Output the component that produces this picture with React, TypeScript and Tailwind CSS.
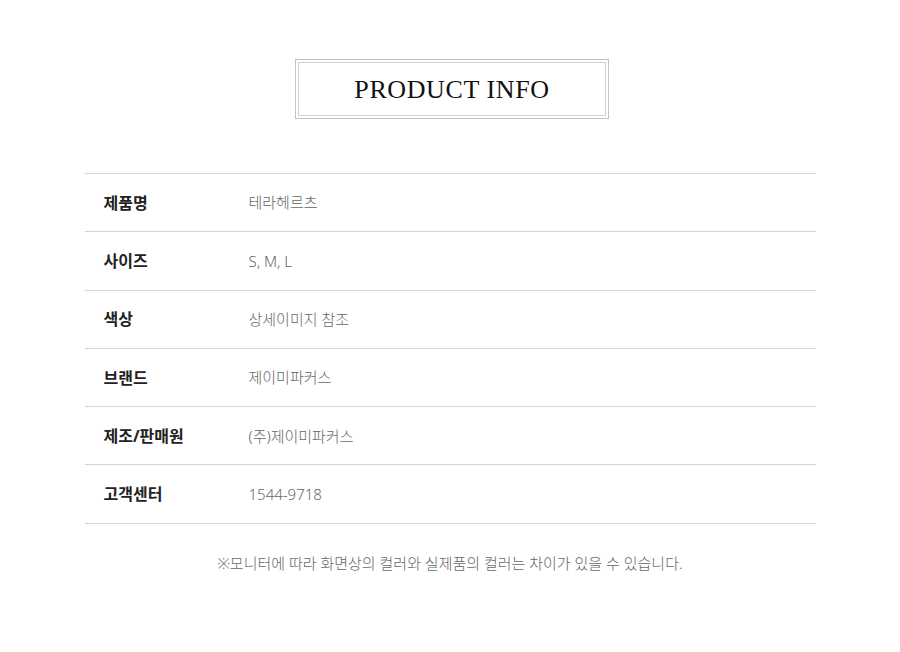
const rows = [
  { label: '제품명', value: '테라헤르츠' },
  { label: '사이즈', value: 'S, M, L' },
  { label: '색상', value: '상세이미지 참조' },
  { label: '브랜드', value: '제이미파커스' },
  { label: '제조/판매원', value: '(주)제이미파커스' },
  { label: '고객센터', value: '1544-9718' },
];

export default function App() {
  return (
    <div className="w-[900px] h-[652px] bg-white font-['Noto_Sans','Noto_Sans_CJK_KR',sans-serif]">
      <div className="flex flex-col items-center pt-[59px]">
        {/* Title box, double border */}
        <div className="w-[314px] h-[60px] ml-[4px] border border-[#c4c4c4] p-[2px]">
          <div className="h-full border border-[#d0d0d0] flex items-center justify-center">
            <h1 className="font-['Liberation_Serif',serif] text-[26px] leading-none text-[#111] tracking-[0.6px] pt-[2px]">
              PRODUCT INFO
            </h1>
          </div>
        </div>

        <div className="w-[731px] mt-[54px] border-t border-[#d4d4d4]">
          {rows.map((r) => (
            <div key={r.label} className="flex items-center h-[58.3px] border-b border-[#d4d4d4]">
              <div className="w-[164px] pl-[19px] text-[16px] font-bold text-[#222]">{r.label}</div>
              <div className="text-[15px] text-[#666] font-light">{r.value}</div>
            </div>
          ))}
        </div>

        <p className="mt-[28px] text-[15px] text-[#666] font-light">
          ※모니터에 따라 화면상의 컬러와 실제품의 컬러는 차이가 있을 수 있습니다.
        </p>
      </div>
    </div>
  );
}
